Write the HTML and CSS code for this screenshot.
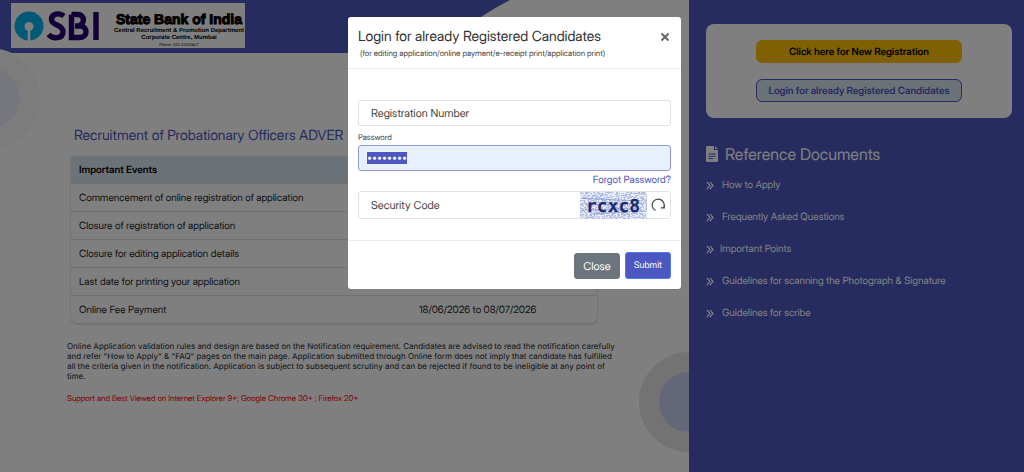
FILE: index.html
```html
<!DOCTYPE html>
<html lang="en">
<head>
<meta charset="utf-8">
<title>Recruitment of Probationary Officers</title>
<link rel="stylesheet" href="styles.css">
</head>
<body>
<div class="page">
<main class="main">
<header class="header">
<svg class="header-curve" viewBox="0 0 208 53" preserveAspectRatio="none"><path d="M29 0 Q13 8 0 17 L-60 53 L208 53 L208 0 Z" fill="#fff"/></svg>
<div class="logo">
<svg class="logo-mark" viewBox="0 0 86 30" role="img" aria-label="SBI">
<circle cx="15" cy="15" r="14.5" fill="#00b5ef"/>
<circle cx="15" cy="15.5" r="4.5" fill="#fff"/>
<rect x="13.7" y="17" width="2.6" height="13" fill="#fff"/>
<g fill="none" stroke="#280071" stroke-width="5.4">
<path d="M50 5 C45 1 37.500 3 37.500 8.500 C37.500 15 49 13 49 20.500 C49 28 39 28.500 34.500 23.500"/>
<path d="M57.500 3.500 V26.500 H66 C74 26.500 74 15 66 15 H61 M57.500 3.500 H64 C71 3.500 71 13.500 65 14.500"/>
<path d="M82 1 V29"/>
</g>
</svg>
<div class="logo-text">
<strong class="bank">State Bank of India</strong>
<span class="dept">Central Recruitment &amp; Promotion Department</span>
<span class="dept">Corporate Centre, Mumbai</span>
<span class="phone">Phone: 022-22820427</span>
</div>
</div>
</header>
<div class="circle circle-left"></div>
<div class="circle circle-right"></div>
<section class="content">
<h1>Recruitment of Probationary Officers ADVER</h1>
<table class="events">
<thead>
<tr><th>Important Events</th><th></th></tr>
</thead>
<tbody>
<tr><td>Commencement of online registration of application</td><td></td></tr>
<tr><td>Closure of registration of application</td><td></td></tr>
<tr><td>Closure for editing application details</td><td></td></tr>
<tr><td>Last date for printing your application</td><td></td></tr>
<tr><td>Online Fee Payment</td><td>18/06/2026 to 08/07/2026</td></tr>
</tbody>
</table>
<p class="note">Online Application validation rules and design are based on the Notification requirement. Candidates are advised to read the notification carefully and refer "How to Apply" &amp; "FAQ" pages on the main page. Application submitted through Online form does not imply that candidate has fulfilled all the criteria given in the notification. Application is subject to subsequent scrutiny and can be rejected if found to be ineligible at any point of time.</p>
<p class="support">Support and Best Viewed on Internet Explorer 9+; Google Chrome 30+ ; Firefox 20+</p>
</section>
</main>
<aside class="sidebar">
<div class="actions">
<button type="button" class="action action-new">Click here for New Registration</button>
<button type="button" class="action action-login">Login for already Registered Candidates</button>
</div>
<h2>
<svg class="doc-icon" viewBox="0 0 12 16"><path fill="currentColor" fill-rule="evenodd" d="M1.500 0 H8 V3.500 Q8 4 8.500 4 H12 V14.500 Q12 16 10.500 16 H1.500 Q0 16 0 14.500 V1.500 Q0 0 1.500 0 Z M9 0 L12 3 H9 Z M2.500 7.500 V8.500 H9.500 V7.500 Z M2.500 9.700 V10.700 H9.500 V9.700 Z M2.500 12 V13 H7 V12 Z"/></svg>
Reference Documents
</h2>
<ul class="docs">
<li><svg viewBox="0 0 8 9"><use href="#chevrons"/></svg><a href="#">How to Apply</a></li>
<li><svg viewBox="0 0 8 9"><use href="#chevrons"/></svg><a href="#">Frequently Asked Questions</a></li>
<li class="tight"><svg viewBox="0 0 8 9"><use href="#chevrons"/></svg><a href="#">Important Points</a></li>
<li><svg viewBox="0 0 8 9"><use href="#chevrons"/></svg><a href="#">Guidelines for scanning the Photograph &amp; Signature</a></li>
<li><svg viewBox="0 0 8 9"><use href="#chevrons"/></svg><a href="#">Guidelines for scribe</a></li>
</ul>
</aside>
</div>
<svg class="defs"><defs><path id="chevrons" d="M.8 .8 L4 4.500 L.8 8.200 M3.800 .8 L7 4.500 L3.800 8.200" fill="none" stroke="currentColor" stroke-width="1.200"/></defs></svg>

<div class="backdrop">
<form class="modal" role="dialog" aria-labelledby="modalTitle">
<div class="modal-header">
<div>
<h2 id="modalTitle">Login for already Registered Candidates</h2>
<small>(for editing application/online payment/e-receipt print/application print)</small>
</div>
<button type="button" class="modal-x" aria-label="Close dialog"><svg viewBox="0 0 10 10"><path d="M1.500 1.500 L8.500 8.500 M8.500 1.500 L1.500 8.500" stroke="currentColor" stroke-width="2"/></svg></button>
</div>
<div class="modal-body">
<input class="field" type="text" id="regNo" aria-label="Registration Number" placeholder="Registration Number">
<label class="pass-label" for="password">Password</label>
<input class="field field-pass" type="password" id="password" value="password">
<a class="forgot" href="#">Forgot Password?</a>
<div class="captcha-row">
<input class="captcha-input" type="text" id="captcha" aria-label="Security Code" placeholder="Security Code">
<svg class="captcha" viewBox="0 0 67 27">
<defs>
<filter id="specks" x="0" y="0" width="100%" height="100%"><feTurbulence type="fractalNoise" baseFrequency=".5 .8" numOctaves="2" seed="4"/><feColorMatrix values="0 0 0 0 .3  0 0 0 0 .38  0 0 0 0 .7  9 0 0 0 -4.100"/></filter>
</defs>
<rect width="67" height="27" fill="#eef0f8"/>
<rect width="67" height="27" filter="url(#specks)" opacity=".75"/>
<path d="M2 6 L60 9 M6 13 L64 11 M3 18 L58 16 M10 22 L66 19 M15 3 L50 24" stroke="#7f90d4" stroke-width=".7" fill="none"/>
<text x="6" y="20">rcxc8</text>
</svg>
<button type="button" class="refresh" aria-label="Refresh code"><svg viewBox="0 0 14 14"><path d="M4.500 12.500 A6 6 0 1 1 12.700 9.500 M9.800 9.800 H13.300 V6.500" fill="none" stroke="currentColor" stroke-width="1.200"/></svg></button>
</div>
</div>
<div class="modal-footer">
<button type="button" class="btn btn-close">Close</button>
<button type="submit" class="btn btn-submit">Submit</button>
</div>
</form>
</div>
<script>
    const password = document.getElementById('password');
    password.focus();
    password.select();
</script>
</body>
</html>
```
FILE: styles.css
```css
* {
  box-sizing: border-box;
}
body {
  margin: 0;
  font-family: "Inter Display", "Inter Tight", Inter, "Liberation Sans", sans-serif;
  font-size: 10px;
  color: #212529;
  text-rendering: geometricPrecision;
}
button, input {
  font-family: inherit;
  text-rendering: inherit;
}
h1, h2, p, ul {
  margin: 0;
  padding: 0;
  font-weight: 400;
}
a {
  color: inherit;
  text-decoration: none;
}
.defs {
  position: absolute;
  width: 0;
  height: 0;
}
.page {
  display: flex;
  min-height: 100vh;
}

/* left side */
.main {
  position: relative;
  flex: 1;
  overflow: hidden;
}
.header {
  position: relative;
  height: 53px;
  padding: 3px 11px;
  background: #4c57c1;
}
.header-curve {
  position: absolute;
  top: 0;
  right: 0;
  width: 208px;
  height: 53px;
  overflow: visible;
}
.logo {
  display: flex;
  align-items: center;
  justify-content: space-between;
  width: 234px;
  height: 45px;
  padding: 0 1px 0 3px;
  background: #fff;
  color: #000;
}
.logo-mark {
  width: 86px;
  height: 30px;
}
.logo-text {
  display: flex;
  flex-direction: column;
  align-items: center;
  padding-top: 6px;
  font-family: "Liberation Sans", Arial, sans-serif;
}
.bank {
  font-size: 14px;
  line-height: 17px;
  -webkit-text-stroke: 1px #000;
}
.dept {
  font-size: 6px;
  font-weight: 700;
  line-height: 7px;
}
.phone {
  font-size: 4px;
  line-height: 5px;
}
.circle {
  position: absolute;
  border-radius: 50%;
}
.circle-left {
  top: 48px;
  left: -60px;
  width: 100px;
  height: 100px;
  background: #ececff;
  border: 20px solid #f8f8fa;
}
.circle-right {
  top: 352px;
  right: -50px;
  width: 100px;
  height: 100px;
  background: #c9cef0;
  border: 20px solid #e7e7e7;
}
.content {
  position: relative;
  padding: 74px 70px 0 67px;
}
.content h1 {
  padding-left: 7px;
  font-size: 14px;
  line-height: 18px;
  color: #4c57c1;
  white-space: nowrap;
}
.events {
  width: calc(100% - 26px);
  margin: 11px 0 0 4px;
  border-spacing: 0;
  border-radius: 0 0 6px 6px;
  box-shadow: 0 1px 3px rgba(0, 0, 0, .2);
  font-size: 10px;
}
.events th,
.events td {
  height: 28px;
  padding: 0 8px;
  text-align: left;
  border-bottom: 1px solid #dee2e6;
}
.events th {
  background: #d6e6f3;
  color: #000;
  font-weight: 600;
}
.events th:first-child {
  width: 340px;
}
.events tr:last-child td {
  height: 27px;
  border-bottom: 0;
}
.note {
  margin-top: 18px;
  font-family: Inter, "Liberation Sans", sans-serif;
  font-size: 8px;
  line-height: 10px;
}
.support {
  margin-top: 12px;
  font-size: 8px;
  line-height: 10px;
  color: #f00;
}

/* right side */
.sidebar {
  width: 335px;
  padding: 24px 12px 0 17px;
  background: #4c57c1;
  color: #fff;
}
.actions {
  display: flex;
  flex-direction: column;
  gap: 16px;
  padding: 16px 50px;
  background: #fff;
  border-radius: 8px;
}
.action {
  height: 23px;
  padding: 0;
  border: 1px solid #ffc107;
  border-radius: 6px;
  font-size: 10px;
  font-weight: 600;
}
.action-new {
  background: #ffc107;
  color: #000;
}
.action-login {
  background: #d6e6f3;
  border-color: #4c57c1;
  color: #4c57c1;
}
.sidebar h2 {
  display: flex;
  align-items: center;
  gap: 7px;
  margin-top: 26px;
  font-size: 16px;
  line-height: 20px;
}
.doc-icon {
  width: 12px;
  height: 16px;
}
.docs {
  margin-top: 13px;
  list-style: none;
}
.docs li {
  display: flex;
  align-items: center;
  gap: 8px;
  height: 16px;
  margin-bottom: 16px;
}
.docs li.tight {
  gap: 6px;
}
.docs svg {
  width: 8px;
  height: 9px;
}

/* login dialog */
.backdrop {
  position: fixed;
  inset: 0;
  display: flex;
  align-items: flex-start;
  justify-content: center;
  background: rgba(0, 0, 0, .5);
}
.modal {
  width: 333px;
  margin: 17px 0 0 5px;
  background: #fff;
  border-radius: 3px;
}
.modal-header {
  display: flex;
  align-items: flex-start;
  justify-content: space-between;
  padding: 10px;
  height: 52px;
  border-bottom: 1px solid #e9ecef;
}
.modal-header h2 {
  font-size: 14px;
  line-height: 19px;
  color: #333;
}
.modal-header small {
  display: block;
  padding-left: 2px;
  font-size: 8px;
  line-height: 14px;
  color: #444;
}
.modal-x {
  width: 12px;
  height: 20px;
  padding: 0;
  border: 0;
  background: none;
  color: #666;
}
.modal-x svg {
  display: block;
  width: 10px;
  height: 10px;
  margin: 0 auto;
}
.modal-body {
  display: flex;
  flex-direction: column;
  padding: 31px 10px 21px;
}
.field,
.captcha-row {
  width: 100%;
  height: 26px;
  border: 1px solid #dee2e6;
  border-radius: 3px;
}
.field {
  padding: 0 12px;
  font-size: 11px;
}
.field::placeholder,
.captcha-input::placeholder {
  color: #444;
}
.pass-label {
  margin: 6px 0 2px;
  font-size: 8px;
  line-height: 11px;
  color: #444;
}
.field-pass {
  padding: 0 8px;
  background: #e8f0fe;
  border-color: #8f98e0;
  outline: 0;
  font-size: 10px;
}
.field-pass::selection {
  background: #4c57c1;
  color: #fff;
}
.forgot {
  align-self: flex-end;
  margin: 2px 0 4px;
  font-size: 10px;
  line-height: 14px;
  color: #4c57c1;
}
.captcha-row {
  display: flex;
  align-items: center;
  height: 28px;
}
.captcha-input {
  flex: 1;
  min-width: 0;
  padding: 0 12px;
  border: 0;
  outline: 0;
  background: none;
  font-size: 11px;
}
.captcha {
  width: 67px;
  height: 27px;
}
.captcha text {
  font: 700 18px "DejaVu Sans Mono", monospace;
  fill: #1c2b6b;
}
.refresh {
  width: 23px;
  padding: 0 4px;
  border: 0;
  background: none;
  color: #444;
}
.refresh svg {
  display: block;
  width: 14px;
  height: 14px;
}
.modal-footer {
  display: flex;
  align-items: center;
  justify-content: flex-end;
  gap: 5px;
  padding: 11px 10px 10px;
  border-top: 1px solid #e9ecef;
}
.btn {
  height: 26px;
  width: 46px;
  padding: 0;
  border: 1px solid #6c757d;
  border-radius: 3px;
  background: #6c757d;
  color: #fff;
  font-size: 11px;
}
.btn-submit {
  height: 27px;
  border-color: #4c7ae8;
  background: #4c57c1;
  font-size: 9px;
}
```
